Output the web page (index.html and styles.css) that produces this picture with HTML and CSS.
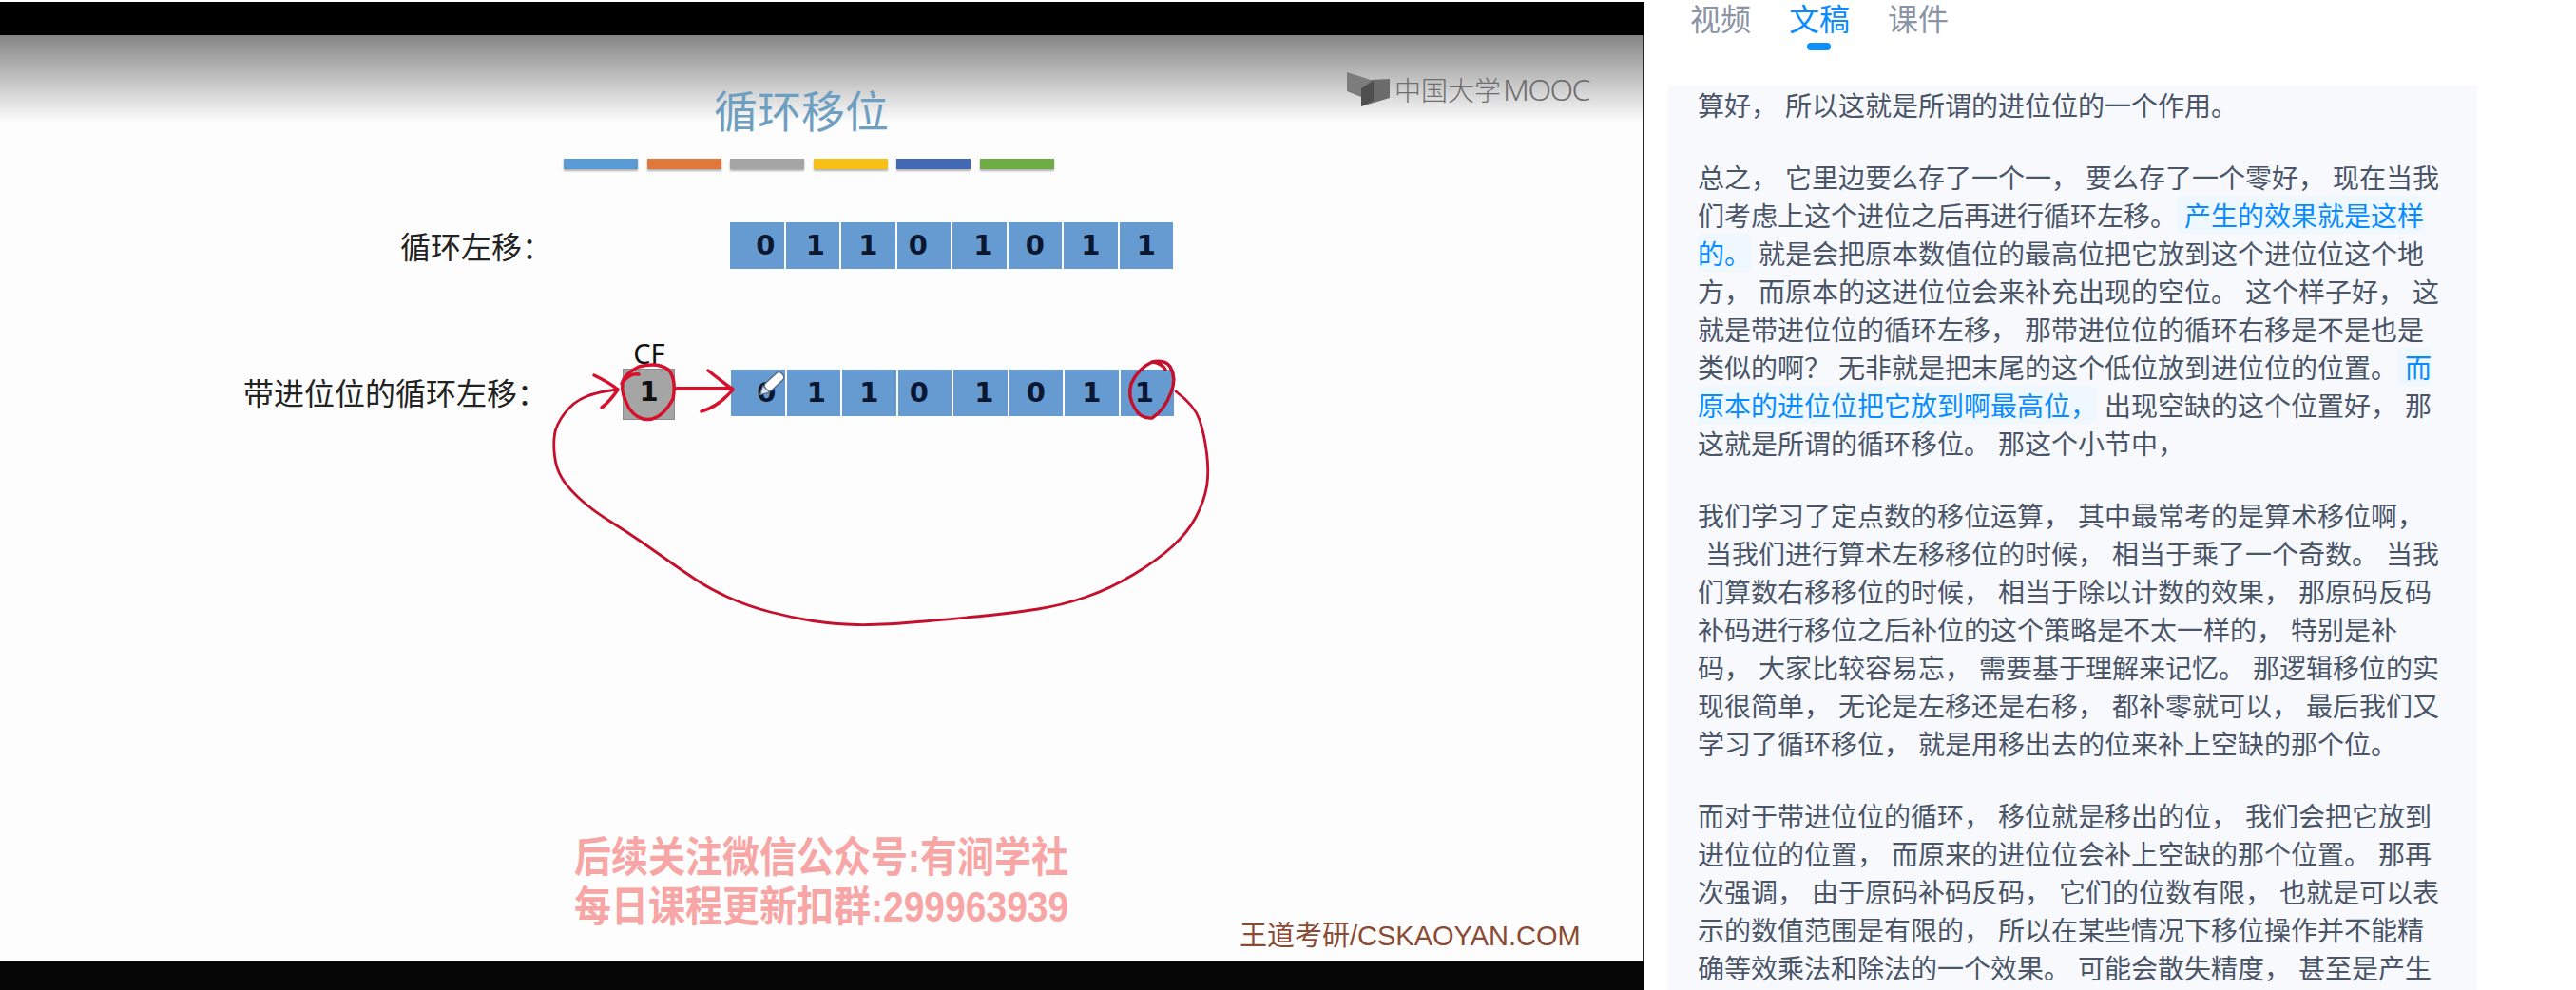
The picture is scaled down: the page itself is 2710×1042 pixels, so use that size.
FILE: index.html
```html
<!DOCTYPE html>
<html lang="zh-CN">
<head>
    <meta charset="UTF-8">
    <title>循环移位 - 文稿</title>
    <link rel="stylesheet" href="styles.css">
</head>
<body>
    <div class="player">
        <div class="letterbox-top"></div>
        <div class="slide">
            <div class="slide-shade"></div>
            <h1 class="slide-title">循环移位</h1>
            <div class="color-strip">
                <span class="strip-blue"></span>
                <span class="strip-orange"></span>
                <span class="strip-gray"></span>
                <span class="strip-yellow"></span>
                <span class="strip-navy"></span>
                <span class="strip-green"></span>
            </div>
            <div class="mooc-logo">
                <svg class="mooc-book" viewBox="0 0 46 38" width="46" height="38">
                    <path fill="#7c7c7c" d="M1 1 L26 9 L16 18 L16 27 L1 21 Z"/>
                    <path fill="#6c6c6c" d="M26 9 L46 8 L46 28 L16 37 L16 18 Z"/>
                    <path fill="#4e4e4e" d="M16 18 L29 10 L29 31 L16 37 Z"/>
                </svg>
                <span class="mooc-cn">中国大学</span><span class="mooc-en">MOOC</span>
            </div>

            <div class="row-label label-one">循环左移：</div>
            <div class="cells cells-one">
                <div class="cell">0</div><div class="cell">1</div><div class="cell">1</div><div class="cell">0</div>
                <div class="cell">1</div><div class="cell">0</div><div class="cell">1</div><div class="cell">1</div>
            </div>

            <div class="row-label label-two">带进位位的循环左移：</div>
            <div class="cf-label">CF</div>
            <div class="cf-box">1</div>
            <div class="cells cells-two">
                <div class="cell">0</div><div class="cell">1</div><div class="cell">1</div><div class="cell">0</div>
                <div class="cell">1</div><div class="cell">0</div><div class="cell">1</div><div class="cell">1</div>
            </div>

            <!-- 手写批注，坐标相对整张截图 -->
            <svg class="ink" viewBox="0 37 1730 975" width="1730" height="975">
                <g fill="none" stroke="#d7102c" stroke-linecap="round" stroke-linejoin="round">
                    <path stroke-width="3.5" d="M672 394 Q662 392 654 404 Q657 393 672 386 Q692 381 703 389 Q712 399 708 420 Q698 438 686 441 Q672 444 662 430 Q653 414 655 403"/>
                    <path stroke-width="3.5" d="M625 395 Q640 402 650 410 Q642 422 633 429"/>
                    <path stroke-width="4" d="M712 409 L770 409"/>
                    <path stroke-width="3.5" d="M745 390 Q760 402 771 410 Q756 428 738 433"/>
                    <path stroke="#c4102c" stroke-width="3.5" d="M1226 389 Q1222 382 1212 381 Q1226 378 1231 386 Q1238 398 1232 413 Q1225 432 1212 440 Q1200 441 1194 430 Q1186 418 1190 404 Q1197 388 1212 381"/>
                </g>
                <path fill="none" stroke="#c4102c" stroke-width="2.8" stroke-linecap="round" stroke-linejoin="round"
                    d="M650 410 Q630 412 616.5 417.5 Q603 423 594 435 Q585 447 583.5 457 Q582 467 583.5 480 Q585 493 591 503 Q597 513 610 525 Q623 537 641.5 548.5 Q660 560 676.5 571.5 Q693 583 705 591.5 Q717 600 732 610 Q747 620 767 629 Q787 638 810 644 Q833 650 855 653.5 Q877 657 902 657.5 Q927 658 972 654 Q1017 650 1042 647.5 Q1067 645 1092 641 Q1117 637 1142 628.5 Q1167 620 1192 605 Q1217 590 1233.5 575 Q1250 560 1258.5 543.5 Q1267 527 1269.5 512 Q1272 497 1269.5 477 Q1267 457 1262 442 Q1257 427 1237 412"/>
                <g transform="translate(812 404) rotate(47)">
                    <rect x="-5" y="-15" width="10" height="23" rx="4" fill="#fff" stroke="#5b6f86" stroke-width="1.5"/>
                    <path d="M-5 8 L0 17 L5 8 Z" fill="#dfe6ee" stroke="#5b6f86" stroke-width="1.2"/>
                </g>
            </svg>

            <div class="promo">
                <div class="promo-line">后续关注微信公众号:有涧学社</div>
                <div class="promo-line">每日课程更新扣群:299963939</div>
            </div>
            <div class="site-mark">王道考研/CSKAOYAN.COM</div>
        </div>
        <div class="letterbox-bottom"></div>
    </div>

    <div class="side">
        <nav class="tabs">
            <a class="tab">视频</a>
            <a class="tab active">文稿</a>
            <a class="tab">课件</a>
        </nav>
        <div class="transcript">
            <p>算好， 所以这就是所谓的进位位的一个作用。</p>
            <p>总之， 它里边要么存了一个一， 要么存了一个零好， 现在当我们考虑上这个进位之后再进行循环左移。<mark> 产生的效果就是这样</mark><mark>的。</mark> 就是会把原本数值位的最高位把它放到这个进位位这个地方， 而原本的这进位位会来补充出现的空位。 这个样子好， 这就是带进位位的循环左移， 那带进位位的循环右移是不是也是类似的啊？ 无非就是把末尾的这个低位放到进位位的位置。<mark> 而</mark><mark>原本的进位位把它放到啊最高位，</mark> 出现空缺的这个位置好， 那这就是所谓的循环移位。 那这个小节中，</p>
            <p>我们学习了定点数的移位运算， 其中最常考的是算术移位啊， &nbsp;当我们进行算术左移移位的时候， 相当于乘了一个奇数。 当我们算数右移移位的时候， 相当于除以计数的效果， 那原码反码补码进行移位之后补位的这个策略是不太一样的， 特别是补码， 大家比较容易忘， 需要基于理解来记忆。 那逻辑移位的实现很简单， 无论是左移还是右移， 都补零就可以， 最后我们又学习了循环移位， 就是用移出去的位来补上空缺的那个位。</p>
            <p>而对于带进位位的循环， 移位就是移出的位， 我们会把它放到进位位的位置， 而原来的进位位会补上空缺的那个位置。 那再次强调， 由于原码补码反码， 它们的位数有限， 也就是可以表示的数值范围是有限的， 所以在某些情况下移位操作并不能精确等效乘法和除法的一个效果。 可能会散失精度， 甚至是产生</p>
        </div>
    </div>
</body>
</html>
```

FILE: styles.css
```css
html, body {
    margin: 0;
    padding: 0;
    height: 1042px;
    overflow: hidden;
    background-color: #fff;
}
body {
    display: flex;
    font-family: "Noto Sans CJK SC", "Noto Sans", sans-serif;
}

/* left: video frame */
.player {
    width: 1730px;
    height: 1042px;
    padding-top: 2px;
    box-sizing: border-box;
    display: flex;
    flex-direction: column;
    flex-shrink: 0;
}
.letterbox-top {
    height: 35px;
    background-color: #000;
}
.letterbox-bottom {
    height: 30px;
    background-color: #060606;
}
.slide {
    position: relative;
    height: 975px;
    background-color: #fdfdfd;
    border-right: 2px solid #222;
    box-sizing: border-box;
    overflow: hidden;
}
.slide-shade {
    height: 91px;
    background: linear-gradient(#858585, #fcfcfc);
}
.slide-title {
    position: absolute;
    left: 751px;
    top: 44px;
    margin: 0;
    font-size: 46px;
    line-height: 66px;
    font-weight: 400;
    color: #6f9fc0;
}
.color-strip {
    position: absolute;
    left: 593px;
    top: 130px;
    display: flex;
    gap: 9.6px;
}
.color-strip span {
    width: 78px;
    height: 11px;
    box-shadow: 0 2px 2px rgba(0,0,0,0.3);
}
.strip-blue { background-color: #5b9bd5; }
.strip-orange { background-color: #e0783c; }
.strip-gray { background-color: #a5a5a5; }
.strip-yellow { background-color: #f6c017; }
.strip-navy { background-color: #4369b4; }
.strip-green { background-color: #6fac46; }

.mooc-logo {
    position: absolute;
    left: 1416px;
    top: 38px;
    display: flex;
    align-items: center;
    color: #6e6e6e;
    line-height: 38px;
}
.mooc-cn {
    margin-left: 5px;
    font-size: 28px;
    font-weight: 300;
}
.mooc-en {
    margin-left: 2px;
    font-family: "Noto Sans", sans-serif;
    font-size: 32px;
    font-weight: 300;
    letter-spacing: -1.5px;
}
.row-label {
    position: absolute;
    font-size: 32px;
    line-height: 46px;
    color: #222;
    white-space: nowrap;
}
.label-one {
    left: 421px;
    top: 198px;
}
.label-two {
    left: 256px;
    top: 352px;
}
.cells {
    position: absolute;
    display: grid;
    grid-template-columns: repeat(8, 1fr);
    gap: 2px;
    width: 466px;
    height: 49px;
}
.cells-one {
    left: 768px;
    top: 197px;
}
.cells-two {
    left: 769px;
    top: 352px;
}
.cell {
    background-color: #659bd0;
    color: #0b1730;
    font-family: "DejaVu Sans", sans-serif;
    font-size: 29px;
    font-weight: 700;
    line-height: 49px;
    text-align: center;
}
/* the digits sit a little off centre in the slide */
.cell:first-child {
    padding-left: 18px;
}
.cell:nth-child(2) {
    padding-left: 6px;
}
.cell:nth-child(4) {
    padding-right: 12px;
}
.cell:nth-child(5) {
    padding-left: 8px;
}
.cells-two .cell:last-child {
    padding-right: 6px;
}
.cf-label {
    position: absolute;
    left: 654px;
    width: 58px;
    top: 316px;
    font-family: "Noto Sans", sans-serif;
    font-size: 29px;
    line-height: 38px;
    color: #111;
    text-align: center;
}
.cf-box {
    position: absolute;
    left: 655px;
    top: 351px;
    width: 55px;
    height: 54px;
    box-sizing: border-box;
    background-color: #a5a5a5;
    border: 1px solid #8c8c8c;
    color: #111;
    font-family: "DejaVu Sans", sans-serif;
    font-size: 29px;
    font-weight: 700;
    line-height: 46px;
    text-align: center;
}
.ink {
    position: absolute;
    left: 0;
    top: 0;
}
.promo {
    position: absolute;
    left: 604px;
    top: 840px;
    color: #f8a5a5;
    font-family: "Liberation Sans", "Noto Sans CJK SC", sans-serif;
    font-size: 39px;
    font-weight: 700;
    line-height: 45px;
    transform: scaleY(1.15);
    transform-origin: top left;
}
.promo-line {
    white-space: nowrap;
}
.site-mark {
    position: absolute;
    left: 1304px;
    top: 930px;
    font-family: "Liberation Sans", "Noto Sans CJK SC", sans-serif;
    font-size: 29px;
    line-height: 36px;
    color: #8a4b34;
    white-space: nowrap;
}

/* right: tabs + transcript */
.side {
    flex: 1;
    display: flex;
    flex-direction: column;
    height: 1042px;
}
.tabs {
    height: 90px;
    display: flex;
    gap: 40px;
    padding-left: 48px;
    box-sizing: border-box;
    flex-shrink: 0;
}
.tab {
    position: relative;
    font-size: 32px;
    line-height: 36px;
    color: #8a94a6;
}
.tab.active {
    color: #0a8cff;
}
.tab.active::after {
    content: "";
    position: absolute;
    left: 19px;
    top: 45px;
    width: 25px;
    height: 8px;
    border-radius: 4px;
    background-color: #0f90ff;
}
.transcript {
    flex: 1;
    width: 851px;
    margin-left: 25px;
    padding: 0 37px 0 31px;
    box-sizing: border-box;
    background-color: #f7f9fd;
    overflow: hidden;
    color: #4a5568;
    font-size: 28px;
    line-height: 40px;
    word-spacing: 1.7px;
}
.transcript p {
    margin: 0 0 36px;
}
.transcript mark {
    background-color: #f0f8ff;
    color: #0a8cff;
}
```
